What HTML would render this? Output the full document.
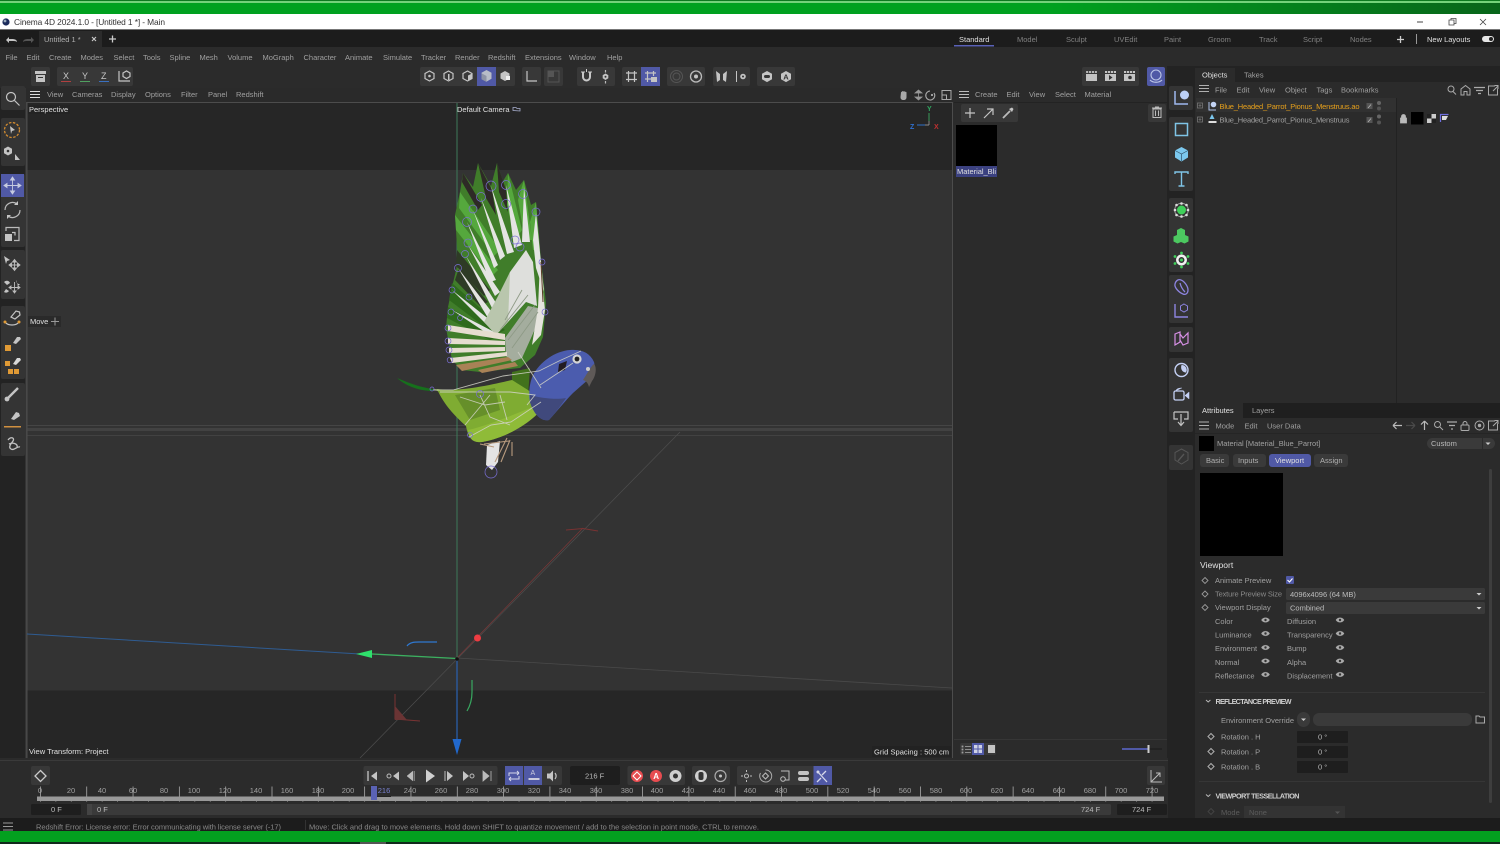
<!DOCTYPE html>
<html><head><meta charset="utf-8"><title>Cinema 4D</title>
<style>
html,body{margin:0;padding:0;background:#2b2b2b;width:1500px;height:844px;overflow:hidden}
svg{display:block;position:absolute;left:0;top:0;filter:blur(.3px)}
text{font-family:"Liberation Sans",sans-serif;font-size:7.5px;fill:#a0a0a0}
.w{fill:#e0e0e0}.b{fill:#cfcfcf;font-weight:bold}.d{fill:#5c5c5c}
.g{fill:#383838}.s{fill:#5059a6}
.i{fill:none;stroke:#c4c4c4;stroke-width:1.2}
.f{fill:#c4c4c4}
</style></head><body>
<svg width="1500" height="844" viewBox="0 0 1500 844">
<defs>
<linearGradient id="gt" x1="0" x2="1"><stop offset="0" stop-color="#00a11f"/><stop offset=".7" stop-color="#00a11f"/><stop offset="1" stop-color="#08651a"/></linearGradient>
<filter id="bl" x="-5%" y="-5%" width="110%" height="110%"><feGaussianBlur stdDeviation=".3"/></filter>
</defs>
<!-- window chrome -->
<rect width="1500" height="844" fill="#2b2b2b"/>
<rect width="1500" height="14" fill="url(#gt)"/>
<rect width="1500" height="1" fill="#0d7a1f"/>
<rect y="1" width="1500" height="2" fill="#74d27a"/>
<rect y="14" width="1500" height="16" fill="#fff"/>
<rect y="29" width="1500" height="1" fill="#777"/>
<circle cx="6" cy="22" r="3.6" fill="#1c2c5c"/><circle cx="5" cy="21" r="1.4" fill="#9ab"/>
<text x="14" y="25" style="font-size:8.4px;fill:#333" textLength="151">Cinema 4D 2024.1.0 - [Untitled 1 *] - Main</text>
<path d="M1417 22h6" stroke="#444" fill="none"/>
<path d="M1449 20h5v5h-5zM1451 20v-1.500h5v5h-2" stroke="#444" fill="none" stroke-width=".8"/>
<path d="M1480 19l6 6M1486 19l-6 6" stroke="#444" fill="none" stroke-width=".8"/>
<!-- tab bar -->
<rect y="30" width="1500" height="17" fill="#1c1c1c"/>
<rect x="39" y="31" width="63" height="16" fill="#2b2b2b"/>
<path d="M6 40l3-3v2h3c3 0 5 1 5 3-1-1-3-1-5-1H9v2z" class="f"/>
<path d="M34 40l-3-3v2h-3c-3 0-5 1-5 3 1-1 3-1 5-1h3v2z" fill="#555"/>
<text x="44" y="42" style="fill:#b0b0b0">Untitled 1 *</text>
<path d="M92 37l4 4M96 37l-4 4" stroke="#ccc" stroke-width="1.100"/>
<path d="M109 39h7M112.500 35.500v7" stroke="#ccc" stroke-width="1.300"/>
<text x="959" y="42" class="w">Standard</text><rect x="954" y="45" width="40" height="1.500" fill="#5a62b8"/>
<text x="1017" y="42" style="fill:#808080">Model</text><text x="1066" y="42" style="fill:#808080">Sculpt</text><text x="1114" y="42" style="fill:#808080">UVEdit</text><text x="1164" y="42" style="fill:#808080">Paint</text><text x="1208" y="42" style="fill:#808080">Groom</text><text x="1259" y="42" style="fill:#808080">Track</text><text x="1303" y="42" style="fill:#808080">Script</text><text x="1350" y="42" style="fill:#808080">Nodes</text>
<path d="M1397 39.500h7M1400.500 36v7" stroke="#ccc" stroke-width="1.300"/>
<rect x="1416" y="34" width="1" height="10" fill="#999"/>
<text x="1427" y="42" class="w">New Layouts</text>
<rect x="1482" y="36" width="12" height="6" rx="3" fill="#e6e6e6"/><circle cx="1491" cy="39" r="2" fill="#222"/>
<!-- menu -->
<text x="5.500" y="60">File</text><text x="26.500" y="60">Edit</text><text x="49" y="60">Create</text><text x="80.500" y="60">Modes</text><text x="113.500" y="60">Select</text><text x="143" y="60">Tools</text><text x="169.500" y="60">Spline</text><text x="199.500" y="60">Mesh</text><text x="227.500" y="60">Volume</text><text x="262.500" y="60">MoGraph</text><text x="303.500" y="60">Character</text><text x="345" y="60">Animate</text><text x="383" y="60">Simulate</text><text x="421" y="60">Tracker</text><text x="455" y="60">Render</text><text x="488" y="60">Redshift</text><text x="525" y="60">Extensions</text><text x="569" y="60">Window</text><text x="607" y="60">Help</text>
<!-- top toolbar -->
<g>
<rect x="31" y="67" width="19" height="19" rx="2" class="g"/>
<path d="M35 71h11v3H35zM36 75h9v7h-9z" class="f"/><rect x="38" y="77" width="5" height="1" fill="#333"/>
<rect x="57" y="67" width="76" height="19" rx="2" class="g"/>
<text x="63" y="79" style="font-size:9px;fill:#c8c8c8">X</text><rect x="61" y="81" width="10" height="1" fill="#b04040"/>
<text x="82" y="79" style="font-size:9px;fill:#c8c8c8">Y</text><rect x="80" y="81" width="10" height="1" fill="#50a060"/>
<text x="101" y="79" style="font-size:9px;fill:#c8c8c8">Z</text><rect x="99" y="81" width="10" height="1" fill="#3a70c0"/>
<path d="M119 71v10h11" class="i"/><path d="M123 73l3.500-2 3.500 2v3.500l-3.500 2-3.500-2z" class="i"/>
<rect x="420" y="67" width="95" height="19" rx="2" class="g"/><rect x="477" y="67" width="19" height="19" fill="#5059a6"/>
<path d="M429.500 71l4.500 2.500v5l-4.500 2.500-4.500-2.500v-5z" class="i"/><circle cx="429.500" cy="76" r="1.300" class="f"/>
<path d="M448.500 71l4.500 2.500v5l-4.500 2.500-4.500-2.500v-5z" class="i"/><path d="M448 74h1.500v6H448z" class="f"/>
<path d="M467.500 71l4.500 2.500v5l-4.500 2.500-4.500-2.500v-5z" class="i"/><path d="M468 75.500l4-2v5l-4 2.500z" class="f"/>
<path d="M486.500 70l5 2.800v6l-5 2.800-5-2.800v-6z" fill="#b8bcc8"/><path d="M486.500 76v6l-5-2.800v-6z" fill="#8e93a6"/>
<path d="M505 71l4.500 2.500v5l-4.500 2.500-4.500-2.500v-5z" class="f"/><rect x="506" y="76" width="4" height="4" fill="#eee"/>
<rect x="522" y="67" width="19" height="19" rx="2" class="g"/><rect x="544" y="67" width="19" height="19" rx="2" class="g"/>
<path d="M527 71v10h10" class="i"/>
<path d="M548 71h11v11h-11z" fill="none" stroke="#555"/><rect x="548" y="71" width="6" height="6" fill="#555"/>
<rect x="577" y="67" width="38" height="19" rx="2" class="g"/>
<path d="M583 72v5a3.500 3.500 0 0 0 7 0v-5" fill="none" stroke="#c8c8c8" stroke-width="2"/><path d="M586.500 69v3M581 72h4M588 72h4" stroke="#ccc"/>
<path d="M605.500 73.500l2.800 1.600v3.200l-2.800 1.700-2.800-1.700v-3.200z" class="f"/><circle cx="605.500" cy="76.800" r="1" fill="#333"/><path d="M605.500 70v2.500M605.500 81v2.500" stroke="#bbb" stroke-width="1.200"/>
<rect x="622" y="67" width="38" height="19" rx="2" class="g"/><rect x="641" y="67" width="19" height="19" fill="#5059a6"/>
<path d="M626 73h11M626 79.500h11M628.500 71v11M634.500 71v11" class="i"/>
<path d="M645 73h11M645 79h6M647.500 71v11M653.500 71v5" class="i"/><rect x="651" y="77" width="6" height="5" class="f"/>
<rect x="667" y="67" width="38" height="19" rx="2" class="g"/>
<circle cx="676.500" cy="76.500" r="6" fill="none" stroke="#555"/><circle cx="676.500" cy="76.500" r="3.500" fill="none" stroke="#555"/>
<circle cx="696" cy="76.500" r="5.500" fill="none" stroke="#bbb" stroke-width="1.300"/><circle cx="696" cy="76.500" r="2" class="f"/>
<rect x="713" y="67" width="37" height="19" rx="2" class="g"/>
<path d="M716 71l4 3v6l-3 2zM727 71l-4 3v6l3 2z" class="f"/><rect x="736" y="71" width="1" height="11" class="f"/><circle cx="743" cy="76.500" r="2.800" class="f"/><circle cx="743" cy="76.500" r="1" fill="#333"/>
<rect x="757" y="67" width="38" height="19" rx="2" class="g"/>
<path d="M767 71l5 2.800v5.500l-5 2.800-5-2.800v-5.500z" fill="#c4c4c4"/><rect x="764" y="75" width="6" height="3" rx="1.500" fill="#333"/>
<path d="M786 71l5 2.800v5.500l-5 2.800-5-2.800v-5.500z" fill="#c4c4c4"/><text x="783.300" y="79.500" style="font-size:7.500px;fill:#333;font-weight:bold">A</text>
<rect x="1082" y="67" width="57" height="19" rx="2" class="g"/>
<path d="M1086 74h11v7h-11z" class="f"/><path d="M1086 71h11v2h-11z" class="f" stroke="#383838" stroke-width=".2"/><path d="M1088.500 71v2M1091.500 71v2M1094.500 71v2" stroke="#383838" stroke-width=".8"/>
<path d="M1105 74h11v7h-11z" class="f"/><path d="M1105 71h11v2h-11z" class="f"/><path d="M1107.500 71v2M1110.500 71v2M1113.500 71v2" stroke="#383838" stroke-width=".8"/><path d="M1109 75l3.500 2.500-3.500 2.500z" fill="#333"/>
<path d="M1124 74h11v7h-11z" class="f"/><path d="M1124 71h11v2h-11z" class="f"/><path d="M1126.500 71v2M1129.500 71v2M1132.500 71v2" stroke="#383838" stroke-width=".8"/><circle cx="1130" cy="77.500" r="1.800" fill="#333"/>
<rect x="1147" y="67" width="18" height="19" rx="2" class="s"/>
<circle cx="1156" cy="75" r="5" fill="none" stroke="#bcc6e6" stroke-width="1.100"/><path d="M1150 80c3 3 9 3 12 0" fill="none" stroke="#bcc6e6" stroke-width="1.200"/>
</g>
<!-- left toolbar -->
<rect x="0" y="88" width="26" height="670" fill="#232323"/>
<rect x="25.500" y="88" width="1.500" height="672" fill="#444"/>
<rect x="1" y="86" width="24" height="24" rx="2" fill="#343434"/>
<circle cx="11" cy="97" r="4.500" class="i"/><path d="M14.500 100.500l5 5" class="i"/>
<rect x="1" y="118" width="24" height="48" rx="2" fill="#343434"/>
<circle cx="12" cy="130" r="7.500" fill="none" stroke="#d08a30" stroke-width="1.300" stroke-dasharray="2.500 1.500"/>
<path d="M10 126l5 4-3 1-1 3z" class="f"/>
<path d="M8 146.500l4 2.200v4.600l-4 2.200-4-2.200v-4.600z" class="f"/><circle cx="8" cy="151" r="1.300" fill="#333"/><path d="M15 154l5 6h-5z" class="f"/>
<rect x="1" y="174" width="24" height="73" rx="2" fill="#343434"/>
<rect x="1" y="174" width="23" height="23" fill="#5059a6"/>
<path d="M4 185.500h17M12.500 177v17M4 185.500l3-2v4zM21 185.500l-3-2v4zM12.500 177l-2 3h4zM12.500 194l-2-3h4z" stroke="#c6cbe0" fill="#c6cbe0" stroke-width=".9"/>
<path d="M5 210a7.500 7.500 0 0 1 12-6M20 210a7.500 7.500 0 0 1-12 6" fill="none" stroke="#bbb" stroke-width="1.200"/><path d="M18 201v4h-4zM7 219v-4h4z" class="f"/>
<rect x="5" y="234" width="7" height="7" class="f"/><path d="M6 231v-3.500h13v13h-5" fill="none" stroke="#bbb" stroke-width="1.200"/><path d="M12 232.500l3 0v3" class="i"/>
<rect x="1" y="250" width="24" height="49" rx="2" fill="#343434"/>
<path d="M4 256l6 4-3 1-1 3z" class="f"/><path d="M9 265h11M14.500 259.500v11M9 265l2.500-2v4zM20 265l-2.500-2v4zM14.500 259.500l-2 2.500h4zM14.500 270.500l-2-2.500h4z" stroke="#bbb" fill="#bbb" stroke-width=".9"/>
<path d="M4 282a3.500 3.500 0 0 1 6 1l-3 2zM16 280a3.500 3.500 0 0 0 4 4l-2 2zM4 292a3.500 3.500 0 0 0 5-1l-3-2z" class="f"/><path d="M9 287.500h11M14.500 282v11M9 287.500l2-1.500v3zM20 287.500l-2-1.500v3zM14.500 293l-1.500-2h3z" stroke="#bbb" fill="#bbb" stroke-width=".9"/>
<rect x="1" y="306" width="24" height="73" rx="2" fill="#343434"/>
<path d="M11 317l5-6 3.500 1 .5 3-5 4z" fill="none" stroke="#c4c4c4" stroke-width="1.200"/><path d="M5 322c3 4 11 4 14 0" fill="none" stroke="#c4c4c4" stroke-width="1.200"/><circle cx="5" cy="322" r="1.500" fill="#e09a35"/><circle cx="19" cy="322" r="1.500" fill="#e09a35"/>
<rect x="5" y="345" width="6" height="6" fill="#e09a35"/><path d="M13 343l4-6h3l1 2-5 5z" class="f"/>
<path d="M5 361h5v5H5zM8 369h5v5H8zM14 369h5v5h-5z" fill="#e09a35"/><path d="M13 364l4-6h3l1 2-5 5z" fill="#d8d8d8"/>
<rect x="1" y="383" width="24" height="73" rx="2" fill="#343434"/>
<path d="M7 399l11-11" stroke="#c4c4c4" stroke-width="2.400"/><circle cx="7" cy="399" r="2.400" class="f"/>
<path d="M11 419l5-7 3 1 1 3-6 4z" class="f"/><rect x="4" y="426" width="17" height="1.500" fill="#d09040"/>
<path d="M8 440c3-4 7-2 5 1s-5 6-2 8 6-3 9-2M9 444c4-2 9 0 8 3" fill="none" stroke="#c4c4c4" stroke-width="1.300"/>
<!-- viewport header -->
<rect x="26" y="88" width="928" height="14" fill="#2a2a2a"/>
<path d="M30 91.500h10M30 94.500h10M30 97.500h10" stroke="#ddd" stroke-width="1.100"/>
<text x="47" y="97">View</text><text x="72" y="97">Cameras</text><text x="111" y="97">Display</text><text x="145" y="97">Options</text><text x="181" y="97">Filter</text><text x="208" y="97">Panel</text><text x="236" y="97">Redshift</text>
<path d="M901 92.500c0-1 1-1 1-.3 0-1.500 1.500-1.500 1.500-.2 0-1 1.500-1 1.500.2 0-.7 1.500-.7 1.500.3V97c0 2-1 3-3 3s-3-1-3-3z" fill="#a8a8a8"/>
<path d="M918.500 90v10M915 93l3.500-3 3.500 3zM915 97l3.500 3 3.500-3z" stroke="#999" fill="#999" stroke-width=".8"/>
<path d="M930 91a4.500 4.500 0 1 0 4 2" fill="none" stroke="#aaa" stroke-width="1.100"/><circle cx="932" cy="95" r="1" class="f"/>
<path d="M942 90.500h9v9h-9zM942 95h4.500v4.500M946.500 90.500" fill="none" stroke="#aaa"/>
<!-- viewport -->
<rect x="27" y="102.500" width="925.500" height="656" fill="#262626" stroke="#4c4c4c"/>
<rect x="27.500" y="170" width="924.500" height="520.500" fill="#333"/>
<g filter="url(#bl)">
<rect x="27.500" y="425" width="924.500" height="1" fill="#4c4c4c" opacity=".7"/>
<rect x="27.500" y="428" width="924.500" height="3" fill="#434343"/>
<rect x="27.500" y="435" width="924.500" height="1" fill="#424242"/>
</g>
<!-- scene lines -->
<path d="M457 103V658" stroke="#3d7a5a" stroke-width="1"/>
<path d="M360 758L680 432" stroke="#4e4e4e" stroke-width=".7"/>
<path d="M457 658L952 688" stroke="#4a4a4a" stroke-width=".8"/>
<path d="M27 634L360 654" stroke="#2f5c92" stroke-width="1"/>
<path d="M372 654L457 658.500" stroke="#3cb060" stroke-width="1.300"/>
<path d="M356 654l16-4v8z" fill="#2fe06c"/>
<path d="M457 658L583 528" stroke="#7e3838" stroke-width=".7"/>
<path d="M566 530l17-1.500 15 2.500" stroke="#7a3333" fill="none" stroke-width=".9"/>
<circle cx="477.500" cy="638" r="3.500" fill="#ee3c42"/>
<path d="M457 658v82" stroke="#2b5ea8" stroke-width="1.300"/>
<path d="M452.500 739h9L457 755z" fill="#2168cc"/>
<path d="M407 646c3-4 8-4 12-4h18" stroke="#2f78d0" stroke-width="1.200" fill="none"/>
<path d="M472 680v12c0 8-2 14-5 19" stroke="#38a860" stroke-width="1.200" fill="none"/>
<path d="M395 694v25l25 2" stroke="#7a3333" fill="none"/><path d="M395 706l12 14h-12z" fill="#6a3434"/>
<circle cx="457" cy="659" r="1.800" fill="#111"/>
<!-- parrot -->
<g filter="url(#bl)">
<!-- wing base fan -->
<path d="M463 173L473 187 478 163 491 186 497 163 503 181 508 173 516 190 524 180 531 205 536 202 541 260 546 303 543 337 535 355 520 368 480 372 462 370 452 360 446 328 448 307 453 283 458 262 457 247 455 215 460 192Z" fill="#3f7d2b"/>
<!-- dark feathers -->
<path d="M478 163L492 190 496 215 486 198ZM497 163L506 190 508 212 499 192ZM463 173L482 205 478 210 462 182Z" fill="#2e2a26"/>
<path d="M457 250L490 290 484 296 456 266ZM459 268L488 302 480 306 455 280Z" fill="#2f3a26"/>
<!-- brighter greens -->
<path d="M508 173L522 230 515 240 507 205ZM524 180L532 240 525 240 518 200ZM536 202L540 250 533 250 530 222ZM455 215L498 270 492 276 456 230ZM460 192L500 250 494 256 459 208Z" fill="#55a83c"/>
<path d="M452 283L505 330 495 335 449 300ZM448 307L500 335 490 340 447 318Z" fill="#2f6b1f"/>
<!-- white shafts -->
<path d="M491 186L514 252 507 254ZM506 185L522 245 514 248ZM524 187L530 242 522 242ZM536 213L544 292 536 268 533 240ZM481 198L505 256 500 260ZM473 210L498 265 494 268ZM467 222L496 280 490 282ZM468 245L500 292 495 296ZM466 256L498 306 492 308ZM458 268L494 315 488 318ZM452 290L500 328 494 332ZM452 310L500 335 494 338Z" fill="#e4e4e2"/>
<!-- big white centre -->
<path d="M510 272L526 250 533 262 537 306 526 302 508 322 496 335 498 300Z" fill="#dedfdc"/>
<path d="M497 298L510 272 508 322 496 335 484 322Z" fill="#b9c6ad"/>
<path d="M505 338L528 306 538 308 540 318 522 358 512 362 506 356Z" fill="#a4ad9e"/>
<path d="M540 262L545 310 541 335 532 345 538 308Z" fill="#e6e4de"/>
<path d="M541 262L543 302" stroke="#5a3d26" stroke-width="1"/>
<!-- lower tan-white feathers -->
<path d="M448 325L505 334 505 340 448 331ZM448 338L505 341 505 345 448 344ZM449 348L505 347 505 351 449 353ZM450 358L507 352 507 356 452 363Z" fill="#e6ddd0"/>
<path d="M456 365L508 357 512 360 462 371ZM478 370L515 362 518 366 482 373Z" fill="#a98257"/>
<!-- grey streaks on hub -->
<g fill="none" stroke="#8e9a86" stroke-width=".9"><path d="M505 320L522 290M500 330L528 295M508 340L535 305M512 348L538 312"/></g>
<!-- tail -->
<path d="M397 378c12 5 22 9 36 11l0 2c-14 0-27-5-36-13z" fill="#176f1c"/>
<path d="M433 389L446 390 448 396Z" fill="#7aa53f"/>
<!-- neck green under wing -->
<path d="M512 372L530 368 528 396 512 384Z" fill="#43721f"/>
<!-- body -->
<path d="M437 389C460 392 490 385 512 380C520 385 530 391 546 402C535 420 510 437 482 442C472 443 468 437 466 426C455 416 444 405 437 389Z" fill="#7fac30"/>
<path d="M468 430C490 425 520 412 540 404L546 404C535 420 510 437 482 442C472 443 469 438 468 430Z" fill="#8fbb38"/>
<path d="M455 395L495 388 500 410 470 420Z" fill="#668f29"/>
<!-- head -->
<path d="M533 375C540 362 555 351 570 350C582 349 590 353 594 362C596 370 594 376 590 378L573 393C566 400 558 410 549 420C540 422 533 412 530 402C528 392 530 382 533 375Z" fill="#4b5cae"/>
<path d="M530 402C533 412 540 422 549 420C556 412 562 404 566 398C556 400 540 398 530 395Z" fill="#3f4a7c"/>
<path d="M559 364l8-3-2 9-7 2z" fill="#231f22"/>
<circle cx="577" cy="359" r="4.600" fill="#d4d4d4"/><circle cx="577" cy="359" r="2.400" fill="#222"/>
<path d="M583 380c4-6 8-14 11-16 3 3 2 12-2 17l-3 6c-1-4-3-6-6-7z" fill="#5e5a58"/>
<circle cx="588" cy="369" r="2" fill="#ccc"/>
<g fill="none" stroke="#d2d3c8" stroke-width=".9" opacity=".85">
<path d="M433 390h20l50-14 36-5 20-10 22-10M540 385l33-22M440 392h70l25 3-8 10M480 395l10 22 20 8M469 437l22-12 20-3 30-20M465 425l25-30M500 395l7 25"/>
<path d="M518 352l18 28 5 8M460 397l25 8 20-3"/>
</g>
<path d="M487 445L500 441 498 462 492 470 486 465Z" fill="#e4e4e4"/>
<g stroke="#b79a7e" stroke-width="1.100" fill="none"><path d="M484 444l25-3M507 438l-12 24M510 440l-9 22M512 442v14M480 444l14 3"/></g>
</g>
<g fill="none" stroke="#7a6fd6" stroke-width=".7">
<circle cx="491" cy="472" r="6"/><circle cx="491" cy="186" r="5"/><circle cx="506" cy="185" r="4.500"/><circle cx="523" cy="194" r="4.500"/><circle cx="536" cy="212" r="4"/><circle cx="481" cy="197" r="4.500"/><circle cx="473" cy="209" r="4"/><circle cx="467" cy="222" r="4.500"/><circle cx="506" cy="204" r="4.500"/><circle cx="468" cy="243" r="4"/><circle cx="465" cy="254" r="3.500"/><circle cx="458" cy="268" r="3.500"/><circle cx="452" cy="290" r="3"/><circle cx="451" cy="312" r="3"/><circle cx="448" cy="328" r="3"/><circle cx="448" cy="341" r="3"/><circle cx="449" cy="350" r="3"/><circle cx="450" cy="360" r="2.800"/><circle cx="542" cy="262" r="3"/><circle cx="545" cy="312" r="3"/><circle cx="469" cy="297" r="3"/><circle cx="460" cy="318" r="2.500"/><circle cx="432" cy="389" r="2"/><circle cx="470" cy="435" r="2.500"/><circle cx="480" cy="394" r="3.500"/><circle cx="515" cy="240" r="4"/><circle cx="520" cy="247" r="4"/>
</g>
<!-- viewport text -->
<rect x="28" y="105" width="42" height="9" fill="#1f1f1f" opacity=".5"/>
<text x="29" y="112" class="w">Perspective</text>
<text x="457" y="112" class="w">Default Camera</text>
<path d="M513 110.500v-3h3l1 1h3v2.500z" fill="none" stroke="#a9b0d0" stroke-width=".8"/>
<rect x="28" y="316" width="33" height="11" fill="#2a2a2a"/>
<text x="30" y="324" class="w">Move</text><path d="M51 321.500h8M55 317.500v8" stroke="#999"/>
<text x="29" y="754" class="w">View Transform: Project</text>
<rect x="872" y="746" width="79" height="11" fill="#222"/>
<text x="874" y="754.500" class="w" textLength="75">Grid Spacing : 500 cm</text>
<path d="M929 113v12M917 125h12" stroke="#aaa" stroke-width=".7"/><path d="M929 113v8" stroke="#3a9a5a"/><path d="M917 125h8" stroke="#2f70c8"/>
<text x="927" y="111" style="font-size:7px;fill:#2fa860;font-weight:bold">Y</text>
<text x="910" y="129" style="font-size:7px;fill:#2f70d0;font-weight:bold">Z</text>
<text x="934" y="129" style="font-size:7px;fill:#c03030;font-weight:bold">X</text>
<!-- material panel -->
<rect x="953" y="88" width="214" height="673" fill="#2b2b2b"/>
<path d="M959 91.500h10M959 94.500h10M959 97.500h10" stroke="#bbb" stroke-width="1.100"/>
<text x="975" y="97">Create</text><text x="1006.500" y="97">Edit</text><text x="1029" y="97">View</text><text x="1055" y="97">Select</text><text x="1084.500" y="97">Material</text>
<rect x="954" y="102" width="213" height="1" fill="#232323"/>
<rect x="961" y="104" width="57" height="18" rx="2" class="g"/>
<path d="M965 113h10M970 108v10M984 118l9-9M987 109h6v6" fill="none" stroke="#c4c4c4" stroke-width="1.200"/>
<path d="M1003 118l7-7" stroke="#bbb" stroke-width="1.800"/><path d="M1009 109l3 3 1.500-3-1.500-1.500z" class="f"/>
<rect x="1148" y="104" width="18" height="18" rx="2" class="g"/>
<path d="M1153 109h8v8.500h-8zM1152 108h10M1155 107h4" fill="none" stroke="#bbb"/><path d="M1155.500 110.500v5.500M1158.500 110.500v5.500" stroke="#bbb"/>
<rect x="956" y="125" width="41" height="41" fill="#000"/>
<rect x="956" y="166" width="41" height="11" fill="#3b4180"/>
<text x="957" y="174" class="w" textLength="39">Material_Bli</text>
<rect x="954" y="739" width="213" height="1" fill="#363636"/>
<rect x="960" y="743" width="36" height="12" rx="2" class="g"/><rect x="972" y="743" width="12" height="12" fill="#5059a6"/>
<path d="M962 746h1v1h-1zM962 749h1v1h-1zM962 752h1v1h-1zM965 746.500h6M965 749.500h6M965 752.500h6" stroke="#aaa" stroke-width=".7"/>
<path d="M974 745h3.500v3.500H974zM978.500 745h3.500v3.500h-3.500zM974 749.500h3.500v3.500H974zM978.500 749.500h3.500v3.500h-3.500z" fill="#cfd2e6"/>
<rect x="988" y="745" width="7" height="8" class="f"/>
<rect x="1122" y="748" width="26" height="2" fill="#5059a6"/><rect x="1148" y="748" width="14" height="2" fill="#222"/><rect x="1147.500" y="745" width="2" height="8" fill="#ccc"/>
<!-- right vertical toolbar -->
<rect x="1167" y="66" width="28" height="752" fill="#232323"/>
<g fill="#343434">
<rect x="1169" y="86" width="24" height="24" rx="2"/><rect x="1169" y="117" width="24" height="74" rx="2"/><rect x="1169" y="198" width="24" height="74" rx="2"/><rect x="1169" y="275" width="24" height="48" rx="2"/><rect x="1169" y="327" width="24" height="25" rx="2"/><rect x="1169" y="358" width="24" height="74" rx="2"/><rect x="1169" y="445" width="24" height="25" rx="2"/>
</g>
<path d="M1175 91v13h13" fill="none" stroke="#9fb8ee" stroke-width="1.500"/><circle cx="1184.500" cy="95" r="4.500" fill="#bcd0f6"/>
<rect x="1175.500" y="123.500" width="12" height="12" fill="none" stroke="#7fc4e6" stroke-width="1.500"/>
<path d="M1181.500 147l6.500 3.500v7l-6.500 4-6.500-4v-7z" fill="#7cc8ee"/><path d="M1175 150.500l6.500 3.500 6.500-3.500M1181.500 154v7" stroke="#2f5068" fill="none" stroke-width=".7"/>
<path d="M1175 174v-2h13v2M1181.500 172v14M1178.500 186h6" fill="none" stroke="#7fc4e6" stroke-width="1.400"/>
<circle cx="1181.500" cy="210" r="4.500" fill="#3fd05a"/><circle cx="1181.500" cy="210" r="6.800" fill="none" stroke="#999" stroke-width="1"/>
<circle cx="1175" cy="210" r="1.300" fill="#ddd"/><circle cx="1188" cy="210" r="1.300" fill="#ddd"/><circle cx="1181.500" cy="203.500" r="1.300" fill="#ddd"/><circle cx="1181.500" cy="216.500" r="1.300" fill="#ddd"/><circle cx="1176.500" cy="205" r="1.300" fill="#ddd"/><circle cx="1186.500" cy="205" r="1.300" fill="#ddd"/><circle cx="1176.500" cy="215" r="1.300" fill="#ddd"/><circle cx="1186.500" cy="215" r="1.300" fill="#ddd"/>
<path d="M1181 228l4 2v5l3.500 1.500v5l-4 2-3.500-1.500-3.500 1.500-4-2v-5l3.500-1.500v-5z" fill="#4cc860"/>
<circle cx="1181.500" cy="260" r="4.200" fill="none" stroke="#f0f0f0" stroke-width="2.500"/>
<circle cx="1181.500" cy="260" r="1.500" fill="#3fd05a"/><circle cx="1181.500" cy="253" r="1.400" fill="#3fd05a"/><circle cx="1181.500" cy="267" r="1.400" fill="#3fd05a"/><circle cx="1175" cy="256.500" r="1.400" fill="#3fd05a"/><circle cx="1188" cy="256.500" r="1.400" fill="#3fd05a"/><circle cx="1175" cy="263.500" r="1.400" fill="#3fd05a"/><circle cx="1188" cy="263.500" r="1.400" fill="#3fd05a"/>
<path d="M1175 284c1-4 4-5 6-4 3 1 7 6 7 10s-3 5-5 4c-3-1-9-6-8-10zM1180 283c1 4 3 7 5 9" fill="none" stroke="#8d84e0" stroke-width="1.300"/>
<path d="M1175 304v13h13" fill="none" stroke="#8d84e0" stroke-width="1.400"/><path d="M1184 304l3.500 2v4l-3.500 2-3.500-2v-4z" fill="none" stroke="#8d84e0"/>
<path d="M1175 334l5-2v10l-5 3zM1180 334l3 4 5-5v10l-5 2-3-5" fill="none" stroke="#d890e6" stroke-width="1.200"/>
<circle cx="1181.500" cy="370" r="6.500" fill="none" stroke="#c4d0f4" stroke-width="1.400"/><path d="M1181.500 365a5 5 0 0 1 4.500 7.500c-3 0-6-3-4.500-7.500z" fill="#c4d0f4"/>
<rect x="1174" y="391" width="10" height="9" rx="1.500" fill="none" stroke="#c4d0f4" stroke-width="1.300"/><path d="M1176 391c0-3 5-3 6-3M1189 392v7l-4-3.500z" fill="#c4d0f4" stroke="#c4d0f4" stroke-width=".5"/>
<path d="M1174 412h14v7h-4M1178 419h-4v-7M1181 414v11M1178 422l3 3.500 3-3.500" fill="none" stroke="#c4c4c4" stroke-width="1.200"/>
<path d="M1181.500 449l6.500 3.500v7.500l-6.500 4-6.500-4v-7.500z" fill="none" stroke="#555" stroke-width="1"/><path d="M1178 461l6-7" stroke="#555" stroke-width="1.400"/>
<!-- objects panel -->
<rect x="1195" y="66" width="305" height="16" fill="#232323"/>
<rect x="1195" y="68" width="40" height="14" fill="#2b2b2b"/>
<text x="1202" y="77.500" class="w">Objects</text><text x="1244" y="77.500">Takes</text>
<path d="M1199 85.500h10M1199 88.500h10M1199 91.500h10" stroke="#b0b0b0" stroke-width="1.100"/>
<text x="1215" y="92.500">File</text><text x="1236.500" y="92.500">Edit</text><text x="1259" y="92.500">View</text><text x="1285" y="92.500">Object</text><text x="1316.500" y="92.500">Tags</text><text x="1341" y="92.500">Bookmarks</text>
<circle cx="1451" cy="89" r="3" fill="none" stroke="#aaa"/><path d="M1453 91.500l3 3" stroke="#aaa"/>
<path d="M1461 95v-6l4.500-3.500 4.500 3.500v6h-3v-3.500h-3V95z" fill="none" stroke="#aaa"/>
<path d="M1474 87.500h11M1476 90.500h7M1478 93.500h3" stroke="#aaa" stroke-width="1.200"/>
<path d="M1495 86h-6.500v9h9v-6.500M1493 91l5-5M1494.500 85.500h3.500v3.500" fill="none" stroke="#aaa"/>
<rect x="1196" y="98" width="200" height="14" fill="#313131"/>
<rect x="1396" y="98" width="1" height="305" fill="#222"/>
<rect x="1197.500" y="103" width="5" height="5" fill="none" stroke="#777" stroke-width=".8"/><path d="M1198.500 105.500h3M1200 104v3" stroke="#888" stroke-width=".6"/>
<rect x="1197.500" y="117" width="5" height="5" fill="none" stroke="#777" stroke-width=".8"/><path d="M1198.500 119.500h3M1200 118v3" stroke="#888" stroke-width=".6"/>
<path d="M1209 102v8h7" fill="none" stroke="#aec2ec"/><circle cx="1213.500" cy="104.500" r="2.800" fill="#c4d4f4"/>
<path d="M1212 114l2.500 5h-5z" fill="#7cc8ee"/><path d="M1208.500 122h8" stroke="#ddd" stroke-width="2"/>
<text x="1219.500" y="109" style="fill:#e6a01c" textLength="140">Blue_Headed_Parrot_Pionus_Menstruus.ao</text>
<text x="1219.500" y="122.500" textLength="130">Blue_Headed_Parrot_Pionus_Menstruus</text>
<rect x="1366.500" y="103" width="6" height="6" fill="#555"/><rect x="1366.500" y="117" width="6" height="6" fill="#555"/>
<path d="M1368 108l3-3.500M1368 122l3-3.500" stroke="#bbb" stroke-width=".7"/>
<circle cx="1379" cy="103" r="2" fill="#666"/><circle cx="1379" cy="108.500" r="2" fill="#555"/><circle cx="1379" cy="116.500" r="2" fill="#666"/><circle cx="1379" cy="122.500" r="2" fill="#555"/>
<path d="M1400.500 118h6v5h-6zM1401.500 118v-1.500a2 2 0 0 1 4 0v1.500" fill="#bbb" stroke="#bbb" stroke-width=".8"/>
<rect x="1411" y="112" width="12.500" height="12.500" fill="#000"/>
<rect x="1427" y="114" width="9" height="9" fill="#ccc"/><rect x="1427" y="114" width="4.500" height="4.500" fill="#222"/><rect x="1431.500" y="118.500" width="4.500" height="4.500" fill="#222"/>
<path d="M1440.500 122v-7.500h8" fill="none" stroke="#6f6fe0" stroke-width="1.200"/><path d="M1442 116h6l-2 4h-4z" fill="#ddd"/>
<!-- attributes panel -->
<rect x="1195" y="403" width="305" height="15" fill="#1f1f1f"/>
<rect x="1195" y="403" width="48" height="15" fill="#2b2b2b"/>
<text x="1202" y="413" class="w">Attributes</text><text x="1252" y="413">Layers</text>
<rect x="1195" y="418" width="305" height="400" fill="#2b2b2b"/>
<path d="M1199 422h10M1199 425.500h10M1199 429h10" stroke="#b0b0b0" stroke-width="1.100"/>
<text x="1215.500" y="428.500">Mode</text><text x="1244.500" y="428.500">Edit</text><text x="1267" y="428.500">User Data</text>
<path d="M1393 425.500h9M1393 425.500l3.500-3.500M1393 425.500l3.500 3.500" fill="none" stroke="#bbb" stroke-width="1.200"/>
<path d="M1406 425.500h9M1415 425.500l-3.500-3.500M1415 425.500l-3.500 3.500" fill="none" stroke="#4a4a4a" stroke-width="1.200"/>
<path d="M1424.500 430v-9M1424.500 421l-3.500 3.500M1424.500 421l3.500 3.500" fill="none" stroke="#bbb" stroke-width="1.200"/>
<circle cx="1437.500" cy="424.500" r="3" fill="none" stroke="#aaa"/><path d="M1440 427l3 3" stroke="#aaa"/>
<path d="M1447 422h10M1449 425.500h6M1451 429h2" stroke="#aaa" stroke-width="1.200"/>
<rect x="1461" y="425" width="8" height="5.500" rx="1" fill="none" stroke="#aaa"/><path d="M1463 425v-1.500a2 2 0 0 1 4 0v1.500" fill="none" stroke="#aaa"/>
<circle cx="1479.500" cy="425.500" r="4.500" fill="none" stroke="#aaa"/><circle cx="1479.500" cy="425.500" r="1.700" fill="#aaa"/>
<path d="M1495 421h-6.500v9h9v-6.500M1493 426l5-5M1494.500 420.500h3.500v3.500" fill="none" stroke="#aaa"/>
<rect x="1195" y="433" width="305" height="1" fill="#252525"/>
<rect x="1199" y="436" width="15" height="15" fill="#000"/>
<text x="1217" y="446">Material [Material_Blue_Parrot]</text>
<rect x="1427" y="438" width="68" height="11" rx="5.500" fill="#3a3a3a"/><rect x="1482" y="438" width="1" height="11" fill="#2b2b2b"/>
<text x="1431" y="446" style="fill:#bbb">Custom</text><path d="M1485.500 442.500h5l-2.500 2.500z" fill="#ccc"/>
<g>
<rect x="1200" y="454" width="29" height="13" rx="3" fill="#3a3a3a"/><rect x="1233" y="454" width="33" height="13" rx="3" fill="#3a3a3a"/><rect x="1269" y="454" width="42" height="13" rx="3" fill="#5059a6"/><rect x="1314" y="454" width="34" height="13" rx="3" fill="#3a3a3a"/>
<text x="1206" y="463" style="fill:#b0b0b0">Basic</text><text x="1238" y="463" style="fill:#b0b0b0">Inputs</text><text x="1275" y="463" class="w">Viewport</text><text x="1320" y="463" style="fill:#b0b0b0">Assign</text>
</g>
<rect x="1200" y="473" width="83" height="83" fill="#000"/>
<rect x="1489" y="469" width="3" height="334" rx="1.500" fill="#3e3e3e"/>
<text x="1200" y="568" class="w" style="font-size:8.600px">Viewport</text>
<g fill="none" stroke="#999" stroke-width=".9">
<path d="M1205 577.500l3 3-3 3-3-3zM1205 591l3 3-3 3-3-3zM1205 604.500l3 3-3 3-3-3z"/>
<path d="M1211 733.500l3 3-3 3-3-3zM1211 748.500l3 3-3 3-3-3zM1211 763.500l3 3-3 3-3-3z" stroke="#aaa" stroke-width="1.100"/>
<path d="M1211 808.500l3 3-3 3-3-3z" stroke="#444"/>
</g>
<text x="1215" y="583">Animate Preview</text><text x="1215" y="596.500" style="fill:#8a8a8a" textLength="67">Texture Preview Size</text><text x="1215" y="610">Viewport Display</text>
<rect x="1286" y="576" width="8" height="8" rx="1" fill="#5059a6"/><path d="M1287.500 580l2 2 3-3.500" fill="none" stroke="#fff" stroke-width="1.100"/>
<rect x="1286" y="588" width="199" height="12" rx="1.500" fill="#3a3a3a"/><rect x="1286" y="602" width="199" height="12" rx="1.500" fill="#3a3a3a"/>
<text x="1290" y="597" style="fill:#bdbdbd">4096x4096 (64 MB)</text><text x="1290" y="610.500" style="fill:#bdbdbd">Combined</text>
<path d="M1476.500 593l2.500 2.500 2.500-2.500zM1476.500 607l2.500 2.500 2.500-2.500z" fill="#ccc"/>
<text x="1215" y="624">Color</text><text x="1215" y="637.500">Luminance</text><text x="1215" y="651">Environment</text><text x="1215" y="665">Normal</text><text x="1215" y="678.500">Reflectance</text>
<text x="1287" y="624">Diffusion</text><text x="1287" y="637.500">Transparency</text><text x="1287" y="651">Bump</text><text x="1287" y="665">Alpha</text><text x="1287" y="678.500">Displacement</text>
<g fill="#aaa" stroke="#2b2b2b" stroke-width=".4">
<path d="M1261 620c2-3.500 7-3.500 9 0-2 3.500-7 3.500-9 0zM1335.500 620c2-3.500 7-3.500 9 0-2 3.500-7 3.500-9 0zM1261 633.500c2-3.500 7-3.500 9 0-2 3.500-7 3.500-9 0zM1335.500 633.500c2-3.500 7-3.500 9 0-2 3.500-7 3.500-9 0zM1261 647.500c2-3.500 7-3.500 9 0-2 3.500-7 3.500-9 0zM1335.500 647.500c2-3.500 7-3.500 9 0-2 3.500-7 3.500-9 0zM1261 661c2-3.500 7-3.500 9 0-2 3.500-7 3.500-9 0zM1335.500 661c2-3.500 7-3.500 9 0-2 3.500-7 3.500-9 0zM1261 674.500c2-3.500 7-3.500 9 0-2 3.500-7 3.500-9 0zM1335.500 674.500c2-3.500 7-3.500 9 0-2 3.500-7 3.500-9 0z"/>
</g>
<g fill="#333">
<circle cx="1265.500" cy="620" r="1.200"/><circle cx="1340" cy="620" r="1.200"/><circle cx="1265.500" cy="633.500" r="1.200"/><circle cx="1340" cy="633.500" r="1.200"/><circle cx="1265.500" cy="647.500" r="1.200"/><circle cx="1340" cy="647.500" r="1.200"/><circle cx="1265.500" cy="661" r="1.200"/><circle cx="1340" cy="661" r="1.200"/><circle cx="1265.500" cy="674.500" r="1.200"/><circle cx="1340" cy="674.500" r="1.200"/>
</g>
<rect x="1199" y="692" width="286" height="1" fill="#363636"/>
<path d="M1206 700l2.200 2 2.200-2M1206 794.500l2.200 2 2.200-2" fill="none" stroke="#bbb"/>
<text x="1215.500" y="704" class="b" style="font-size:7.200px" textLength="76">REFLECTANCE PREVIEW</text>
<text x="1221" y="723" textLength="73">Environment Override</text>
<rect x="1297" y="712" width="13" height="15" rx="6.500" fill="#3a3a3a"/><path d="M1301 718.500h5l-2.500 2.500z" fill="#ccc"/>
<rect x="1313" y="713" width="159" height="13" rx="6" fill="#3a3a3a"/>
<path d="M1476 716h3l1 1h4.500v6h-8.500z" fill="none" stroke="#aaa"/>
<text x="1221" y="739.500">Rotation . H</text><text x="1221" y="754.500">Rotation . P</text><text x="1221" y="769.500">Rotation . B</text>
<g fill="#1e1e1e"><rect x="1297" y="731" width="51" height="12" rx="1"/><rect x="1297" y="746" width="51" height="12" rx="1"/><rect x="1297" y="761" width="51" height="12" rx="1"/></g>
<text x="1318" y="739.500" style="fill:#bbb">0 °</text><text x="1318" y="754.500" style="fill:#bbb">0 °</text><text x="1318" y="769.500" style="fill:#bbb">0 °</text>
<rect x="1199" y="781" width="286" height="1" fill="#363636"/>
<text x="1215.500" y="798.500" class="b" style="font-size:7.200px" textLength="84">VIEWPORT TESSELLATION</text>
<text x="1221" y="815" class="d">Mode</text>
<rect x="1244" y="806" width="101" height="12" fill="#333"/><text x="1249" y="815" class="d">None</text><path d="M1335 811.500h5l-2.500 2.500z" fill="#555"/>
<!-- timeline -->
<rect x="0" y="758" width="1168" height="60" fill="#2b2b2b"/>
<rect x="0" y="760" width="1168" height="1" fill="#3a3a3a"/>
<rect x="31" y="766" width="19" height="19" rx="2" class="g"/>
<path d="M40.500 770.500l5.500 5.500-5.500 5.500-5.500-5.500z" fill="none" stroke="#ccc" stroke-width="1.300"/>
<rect x="363.500" y="766" width="134" height="19" rx="2" class="g"/>
<path d="M368 771v10" stroke="#bbb" stroke-width="1.400"/><path d="M371 776l6-4.500v9z" class="f"/>
<circle cx="389" cy="776" r="2" fill="none" stroke="#bbb"/><path d="M399 771.500l-6 4.500 6 4.500z" class="f"/>
<path d="M407 776l6-5v10zM414.500 771v10" fill="#bbb" stroke="#bbb" stroke-width=".5"/>
<path d="M426 769.500l9 6.500-9 6.500z" fill="#d0d0d0"/>
<path d="M445 771v10" stroke="#bbb" stroke-width="1"/><path d="M447 771l6 5-6 5z" class="f"/>
<path d="M463 771l6 5-6 5z" class="f"/><circle cx="472" cy="776" r="2" fill="none" stroke="#bbb"/>
<path d="M483 771l6 5-6 5zM491 771v10" fill="#bbb" stroke="#bbb" stroke-width=".8"/>
<rect x="505" y="766" width="57" height="19" rx="2" class="g"/><rect x="505" y="766" width="18" height="19" fill="#5059a6"/><rect x="524" y="766" width="18" height="19" fill="#5059a6"/>
<path d="M509 776v-3h10M519 773l-2-2M519 773l-2 2M519 776v3h-10M509 779l2-2M509 779l2 2" fill="none" stroke="#d6d8ea" stroke-width="1"/>
<text x="530.500" y="775" style="font-size:7px;fill:#ccd">A</text><path d="M528.500 778h11v2h-11z" fill="#ccd"/>
<path d="M547 773.500h3l3-3v11l-3-3h-3z" class="f"/><path d="M555 773c1.500 2 1.500 4 0 6" class="i"/>
<rect x="570" y="766" width="50" height="19" rx="2" fill="#1e1e1e"/><text x="585" y="778.500" style="fill:#bbb">216 F</text>
<rect x="627.500" y="766" width="57.500" height="19" rx="2" class="g"/>
<circle cx="637" cy="776" r="6" fill="#e84c50"/><path d="M637 772l4 4-4 4-4-4z" fill="none" stroke="#fff" stroke-width="1"/>
<circle cx="656" cy="776" r="6" fill="#e84c50"/><text x="653.300" y="779" style="font-size:8px;fill:#fff;font-weight:bold">A</text>
<circle cx="675.500" cy="776" r="6" fill="#cfcfcf"/><circle cx="675.500" cy="776" r="2.500" fill="#333"/>
<rect x="692" y="766" width="38" height="19" rx="2" class="g"/>
<circle cx="701" cy="776" r="6" fill="#d0d0d0"/><rect x="698.500" y="772" width="5" height="8" rx="2" fill="#333"/>
<circle cx="720.500" cy="776" r="5.500" fill="none" stroke="#aaa" stroke-width="1.200"/><circle cx="720.500" cy="776" r="1.500" class="f"/>
<rect x="737" y="766" width="95" height="19" rx="2" class="g"/><rect x="813.500" y="766" width="18.500" height="19" fill="#5059a6"/>
<circle cx="746.500" cy="776" r="2" fill="none" stroke="#bbb"/><path d="M746.500 770v2M746.500 780v2M741 776h2M750 776h2" stroke="#bbb"/>
<path d="M765.500 770a6 6 0 1 1-5 3" fill="none" stroke="#aaa"/><path d="M765.500 773l3 3-3 3-3-3z" fill="none" stroke="#bbb"/>
<path d="M781 771h8v9h-4" fill="none" stroke="#bbb"/><circle cx="783" cy="779" r="2.300" fill="none" stroke="#bbb"/>
<rect x="798" y="771" width="11" height="4" rx="2" class="f"/><rect x="798" y="777" width="11" height="4" rx="2" class="f"/>
<path d="M817 771l10 11M826 771l-4 4M817 782l4-4" stroke="#d6d8ea" stroke-width="1.300"/><circle cx="818" cy="772" r="1.500" fill="#d6d8ea"/>
<rect x="1147" y="766" width="18" height="19" rx="2" class="g"/>
<path d="M1151 770v12h11M1151 782l9-9M1156 773h4v4" fill="none" stroke="#bbb"/>
<!-- ruler -->
<path d="M40 791.500H1160" stroke="#aaa" stroke-width="10" stroke-dasharray=".8 45.520" fill="none"/>
<rect x="37" y="796.500" width="1127" height="4.500" fill="#999"/>
<path d="M40 801.500H1160" stroke="#777" stroke-width="1" stroke-dasharray=".8 14.640" fill="none"/>
<rect x="371" y="786" width="6" height="14" fill="#5a62b4"/>
<rect x="377" y="796" width="14" height="1" fill="#222"/>
<g text-anchor="middle">
<text x="40" y="793">0</text><text x="71" y="793">20</text><text x="102" y="793">40</text><text x="133" y="793">60</text><text x="164" y="793">80</text><text x="194" y="793">100</text><text x="225" y="793">120</text><text x="256" y="793">140</text><text x="287" y="793">160</text><text x="318" y="793">180</text><text x="348" y="793">200</text><text x="384" y="793" style="fill:#7a82d0">216</text><text x="410" y="793">240</text><text x="441" y="793">260</text><text x="472" y="793">280</text><text x="503" y="793">300</text><text x="534" y="793">320</text><text x="565" y="793">340</text><text x="596" y="793">360</text><text x="627" y="793">380</text><text x="657" y="793">400</text><text x="688" y="793">420</text><text x="719" y="793">440</text><text x="750" y="793">460</text><text x="781" y="793">480</text><text x="812" y="793">500</text><text x="843" y="793">520</text><text x="874" y="793">540</text><text x="905" y="793">560</text><text x="936" y="793">580</text><text x="966" y="793">600</text><text x="997" y="793">620</text><text x="1028" y="793">640</text><text x="1059" y="793">660</text><text x="1090" y="793">680</text><text x="1121" y="793">700</text><text x="1152" y="793">720</text>
</g>
<rect x="31" y="804" width="50" height="11" rx="1.500" fill="#1e1e1e"/><text x="51" y="812" style="fill:#bbb">0 F</text>
<rect x="87" y="804" width="1024" height="11" rx="1.500" fill="#3a3a3a"/><rect x="87" y="804" width="5" height="11" fill="#444"/>
<text x="97" y="812" style="fill:#bbb">0 F</text><text x="1081" y="812" style="fill:#bbb">724 F</text>
<rect x="1117" y="804" width="50" height="11" rx="1.500" fill="#1e1e1e"/><text x="1132" y="812" style="fill:#bbb">724 F</text>
<!-- status -->
<rect y="818" width="1500" height="13" fill="#1c1c1c"/>
<path d="M3 823h10M3 826.500h10M3 830h10" stroke="#999" stroke-width="1"/>
<text x="36" y="829.500" style="fill:#888" textLength="245">Redshift Error: License error: Error communicating with license server (-17)</text>
<rect x="305" y="820" width="1" height="10" fill="#333"/>
<text x="309" y="829.500" style="fill:#888" textLength="450">Move: Click and drag to move elements. Hold down SHIFT to quantize movement / add to the selection in point mode, CTRL to remove.</text>
<rect y="831" width="1500" height="11" fill="#03a01f"/>
<rect y="842" width="1500" height="2" fill="#12291c"/>
<rect x="360" y="842" width="26" height="2" fill="#555"/>
</svg>
</body></html>
